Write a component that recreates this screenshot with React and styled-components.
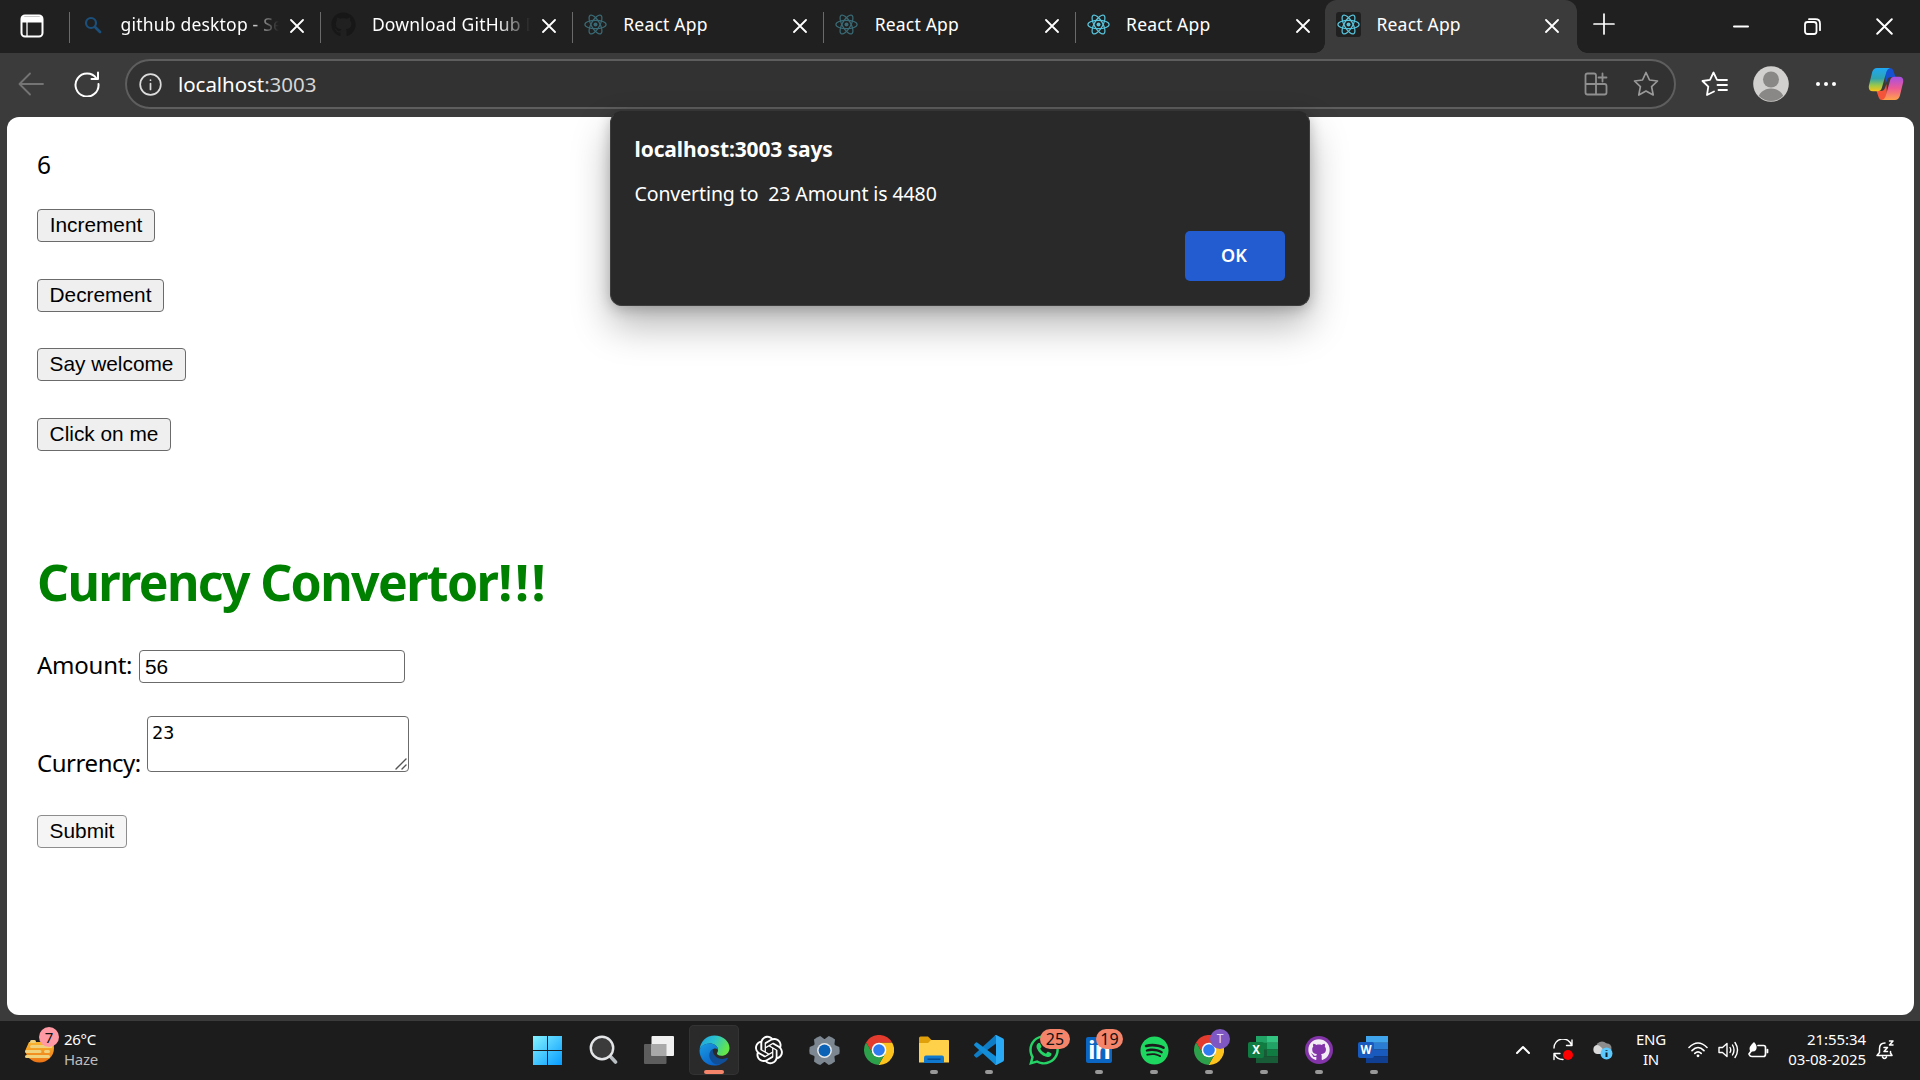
import React from "react";
import styled, { createGlobalStyle } from "styled-components";
import { FaGithub, FaSpotify, FaWhatsapp } from "react-icons/fa";
import { RiOpenaiFill } from "react-icons/ri";

const Global = createGlobalStyle`
  * { box-sizing: border-box; }
  html, body { margin: 0; padding: 0; overflow: hidden; background: #3b3b3b; }
  body { font-family: "Noto Sans", "Open Sans", sans-serif; }
  svg { display: block; flex: none; }
`;

const Screen = styled.div`
  width: 1920px;
  height: 1080px;
  display: flex;
  flex-direction: column;
  background: #3b3b3b;
  overflow: hidden;
`;

/* ---------- tab strip ---------- */
const TabStrip = styled.header`
  height: 53px;
  flex: none;
  display: flex;
  background: #202020;
`;
const StripLead = styled.div`
  width: 69px;
  flex: none;
  display: flex;
  align-items: center;
  justify-content: center;
  padding: 0 6px 2px 0;
`;
const Tab = styled.div`
  width: ${(p) => (p.$active ? 252 : 251.4)}px;
  height: 53px;
  flex: none;
  display: flex;
  align-items: center;
  margin-left: ${(p) => (p.$active ? -1 : 0)}px;
  padding: 0 ${(p) => (p.$active ? 18 : 16)}px 4px 11px;
  position: relative;
  background: ${(p) => (p.$active ? "#3b3b3b" : "transparent")};
  border-radius: 12px 12px 0 0;
  ${(p) =>
    p.$active
      ? `
    &::before, &::after {
      content: "";
      position: absolute;
      bottom: 0;
      width: 10px;
      height: 10px;
    }
    &::before { left: -10px; background: radial-gradient(circle at 0 0, transparent 9.5px, #3b3b3b 10px); }
    &::after { right: -10px; background: radial-gradient(circle at 100% 0, transparent 9.5px, #3b3b3b 10px); }
  `
      : `
    &::before {
      content: "";
      position: absolute;
      left: 0;
      top: 12px;
      width: 1px;
      height: 31px;
      background: #6a6a6a;
    }
  `}
`;
const Favicon = styled.div`
  width: 25px;
  height: 25px;
  flex: none;
  display: flex;
  align-items: center;
  justify-content: center;
  border-radius: 3px;
  background: ${(p) => (p.$boxed ? "#202020" : "transparent")};
  opacity: ${(p) => (p.$dim ? 0.45 : 1)};
`;
const TabTitle = styled.div`
  width: 158px;
  margin: 0 0 2px 15.5px;
  font-size: 17.5px;
  line-height: 28px;
  letter-spacing: 0.2px;
  color: #fff;
  white-space: nowrap;
  overflow: hidden;
  mask-image: ${(p) => (p.$fade ? "linear-gradient(90deg, #000 126px, transparent 158px)" : "none")};
`;
const TabClose = styled.div`
  margin-left: auto;
  padding-top: 3px;
`;
const NewTab = styled.div`
  width: 54px;
  display: flex;
  align-items: center;
  justify-content: center;
  padding-bottom: 5px;
`;
const WindowControls = styled.div`
  margin-left: auto;
  display: flex;
`;
const WindowControl = styled.div`
  width: 71.5px;
  display: flex;
  align-items: center;
  justify-content: center;
`;

/* ---------- toolbar ---------- */
const Toolbar = styled.div`
  height: 64px;
  flex: none;
  display: flex;
  align-items: center;
  padding: 0 0 2px 17px;
`;
const ToolSlot = styled.div`
  width: ${(p) => p.$w}px;
  padding-left: ${(p) => p.$shift || 0}px;
  flex: none;
  display: flex;
  justify-content: center;
  align-items: center;
`;
const AddressBar = styled.div`
  width: 1551px;
  height: 50px;
  flex: none;
  margin: 0 10px 0 11px;
  display: flex;
  align-items: center;
  padding: 0 3px 0 12px;
  background: #323232;
  border: 2px solid #5e5e5e;
  border-radius: 25px;
`;
const Url = styled.div`
  margin: 0 auto 0 16px;
  font-size: 20.5px;
  letter-spacing: -0.05px;
  color: #fff;
  line-height: 28px;
  padding-bottom: 1px;
  span { color: #d6d6d6; }
`;

/* ---------- page ---------- */
const Viewport = styled.main`
  width: 1907px;
  height: 898px;
  margin-left: 7px;
  flex: none;
  position: relative;
  padding: 31px 30px 0;
  background: #fff;
  border-radius: 12px;
  color: #000;
  font-size: 24px;
`;
const Counter = styled.div`
  height: 61px;
  font-size: 24.5px;
  line-height: 33px;
`;
const ButtonStack = styled.div`
  display: flex;
  flex-direction: column;
  align-items: flex-start;
  gap: 36.5px;
`;
const PageButton = styled.button`
  width: ${(p) => p.$w}px;
  height: 33px;
  padding: 0 0 1px;
  border: 1px solid ${(p) => (p.$light ? "#8d8d8d" : "#6b6b6b")};
  border-radius: 4px;
  background: ${(p) => (p.$light ? "#f5f5f5" : "#efefef")};
  color: #000;
  font: 20.83px/28px "Liberation Sans", Arial, sans-serif;
  white-space: nowrap;
`;
const Heading = styled.h1`
  margin: 97.5px 0 0;
  height: 102px;
  font-size: 50px;
  line-height: 68px;
  font-weight: 700;
  letter-spacing: -1.65px;
  color: #008000;
`;
const Bangs = styled.span`
  margin-left: 1px;
  letter-spacing: 2.6px;
`;
const AmountRow = styled.label`
  display: flex;
  gap: 8px;
  line-height: 29px;
  height: 33px;
`;
const AmountInput = styled.input`
  width: 266px;
  height: 33px;
  padding: 0 5px;
  border: 1px solid #6b6b6b;
  border-radius: 4px;
  outline: none;
  background: #fff;
  color: #000;
  font: 20.83px "Liberation Sans", Arial, sans-serif;
`;
const LabelText = styled.span`
  width: ${(p) => p.$w}px;
  white-space: nowrap;
  letter-spacing: ${(p) => p.$ls}px;
  margin-bottom: ${(p) => (p.$drop ? -7 : 0)}px;
`;
const CurrencyRow = styled.label`
  display: flex;
  align-items: flex-end;
  gap: 8px;
  margin: 33px 0 0;
  height: 56px;
`;
const SubmitRow = styled.div`
  display: flex;
  margin-top: 43px;
`;
const AreaWrap = styled.span`
  position: relative;
  display: flex;
  svg { position: absolute; right: 2px; bottom: 2px; }
`;
const CurrencyArea = styled.textarea`
  width: 262px;
  height: 56px;
  padding: 4px;
  border: 1px solid #6b6b6b;
  border-radius: 4px;
  resize: none;
  outline: none;
  background: #fff;
  color: #000;
  font: 18.5px/24px "DejaVu Sans Mono", monospace;
`;

/* ---------- alert ---------- */
const Dialog = styled.div`
  position: absolute;
  left: 603px;
  top: -6px;
  width: 700px;
  height: 195px;
  padding: 22px 24px 24px 23.5px;
  display: flex;
  flex-direction: column;
  background: #292929;
  border: 1px solid #3d3d3d;
  border-top-color: #292929;
  border-radius: 12px;
  box-shadow: 0 20px 38px rgba(0, 0, 0, 0.28), 0 3px 14px rgba(0, 0, 0, 0.22);
  color: #fff;
`;
const DialogTitle = styled.div`
  font-size: 21px;
  font-weight: 700;
  line-height: 31px;
  letter-spacing: -0.12px;
`;
const DialogText = styled.div`
  margin-top: 15px;
  font-size: 19.5px;
  line-height: 28px;
  letter-spacing: -0.1px;
  white-space: pre;
`;
const OkButton = styled.button`
  margin: auto 0 0 auto;
  width: 100px;
  height: 50px;
  padding: 0 2px 2px 0;
  border: 0;
  border-radius: 5px;
  background: #225cd0;
  color: #fff;
  font: 600 18px "Noto Sans", sans-serif;
`;

/* ---------- taskbar ---------- */
const Taskbar = styled.footer`
  height: 59px;
  margin-top: 6px;
  flex: none;
  display: flex;
  background: #1c1c1c;
`;
const Weather = styled.div`
  width: 522px;
  flex: none;
  padding: 6px 0 0 25px;
  display: flex;
  gap: 5px;
`;
const WeatherText = styled.div`
  padding-top: 2px;
  font-size: 15px;
  line-height: 20px;
  letter-spacing: -0.3px;
  color: #fff;
  div + div { color: #bdbdbd; }
`;
const IconBadgeWrap = styled.div`
  position: relative;
  width: 34px;
  height: 36px;
`;
const Badge = styled.span`
  position: absolute;
  left: ${(p) => p.$x}px;
  top: ${(p) => p.$y}px;
  width: ${(p) => p.$w}px;
  height: 20px;
  border-radius: 10px;
  background: ${(p) => p.$bg};
  color: ${(p) => p.$fg || "#111"};
  font-size: ${(p) => p.$size || 15}px;
  line-height: 20px;
  text-align: center;
`;
const Apps = styled.div`
  flex: none;
  display: flex;
  gap: 5px;
  padding-top: 4px;
`;
const AppCell = styled.div`
  position: relative;
  width: 50px;
  height: 50px;
  flex: none;
  margin-right: ${(p) => (p.$spaced ? 1 : 0)}px;
  border-radius: 5px;
  display: flex;
  align-items: center;
  justify-content: center;
  background: ${(p) => (p.$active ? "#2a2a2a" : "transparent")};
  box-shadow: ${(p) => (p.$active ? "inset 0 0 0 1px #333" : "none")};
  &::after {
    content: "";
    display: ${(p) => (p.$running || p.$active ? "block" : "none")};
    position: absolute;
    bottom: 1px;
    left: ${(p) => (p.$active ? 15 : 21)}px;
    width: ${(p) => (p.$active ? 20 : 8)}px;
    height: 4px;
    border-radius: 2px;
    background: ${(p) => (p.$active ? "#f4846a" : "#989898")};
  }
`;
const Tray = styled.div`
  margin-left: auto;
  flex: none;
  display: flex;
  align-items: center;
  padding: 0 17px 2px 0;
`;
const TraySlot = styled.div`
  width: ${(p) => p.$w}px;
  display: flex;
  justify-content: center;
`;
const TrayText = styled.div`
  width: ${(p) => p.$w}px;
  font-size: 15px;
  line-height: 20px;
  letter-spacing: ${(p) => p.$ls || 0}px;
  text-align: ${(p) => p.$align};
  color: #fff;
  padding-bottom: 1px;
`;

/* ---------- drawings ---------- */
const Stroke = ({ w = 24, h = w, box = `0 0 ${w} ${h}`, c = "#fff", s = 1.8, children }) => (
  <svg width={w} height={h} viewBox={box} fill="none" stroke={c} strokeWidth={s} strokeLinecap="round" strokeLinejoin="round">
    {children}
  </svg>
);
const ReactLogo = () => (
  <Stroke w={23} h={25} box="-11.5 -12.5 23 25" c="#58c4dc" s={1.2}>
    <ellipse rx="10.6" ry="4.2" />
    <ellipse rx="10.6" ry="4.2" transform="rotate(60)" />
    <ellipse rx="10.6" ry="4.2" transform="rotate(120)" />
    <circle r="2" fill="#58c4dc" stroke="none" />
  </Stroke>
);
const SearchFav = () => (
  <Stroke w={18} c="#1b4f7c" s={2.2}>
    <circle cx="7" cy="7" r="5" />
    <path d="M11 11l5 5" strokeWidth="2.800" />
  </Stroke>
);
const Cross = ({ size = 14, s = 1.8 }) => (
  <Stroke w={size} h={size} box="0 0 14 14" s={s}>
    <path d="M1 1l12 12M13 1L1 13" />
  </Stroke>
);
const ChromeIcon = () => (
  <svg width="30" height="30" viewBox="-15 -15 30 30">
    <path d="M0 -7.2H13.2A15 15 0 0 0 -13 -7.5L-6.2 3.6L0 0Z" fill="#e33b2e" />
    <path d="M6.2 3.6L-.4 15A15 15 0 0 0 13.2 -7.2H0V0Z" fill="#fcc31e" />
    <path d="M-6.2 3.6L-13 -7.5A15 15 0 0 0 -.4 15L6.2 3.6L0 0Z" fill="#2da04c" />
    <circle r="7.3" fill="#fff" />
    <circle r="5.8" fill="#2f7cf0" />
  </svg>
);
const EdgeIcon = () => (
  <svg width="31" height="31" viewBox="0 0 31 31">
    <defs>
      <linearGradient id="eTop" x1="0" y1="0" x2="1" y2=".4">
        <stop offset="0" stopColor="#1e9de0" />
        <stop offset=".5" stopColor="#2bc3cf" />
        <stop offset="1" stopColor="#63e64a" />
      </linearGradient>
      <linearGradient id="eLow" x1="0" y1="0" x2=".6" y2="1">
        <stop offset="0" stopColor="#1b9de2" />
        <stop offset="1" stopColor="#0a63c9" />
      </linearGradient>
    </defs>
    <path d="M.6 15C1 6.500 7.500.5 15.500.5C24 .5 30.500 6.500 30.500 13C30.500 18 26.500 20.800 22.500 20.800C19.500 20.800 18 19.600 18 18.500C18 17.500 19 17 19 15C19 11 15 8.500 10.800 8.500C5.500 8.500 1.500 11.500.6 15Z" fill="url(#eTop)" />
    <path d="M.5 15.500C1.500 11 5.500 8.500 10.800 8.500C15.200 8.500 19 11.200 19 15C16 11.500 11.500 14.500 11.500 19.500C11.500 25 16.500 29 21.500 29.200C19.700 30.200 17.500 30.600 15.500 30.600C6.800 30.600.5 23.800.5 15.500Z" fill="url(#eLow)" />
    <path d="M13.800 14C10.500 16 9.500 20 11 23.700C13 28.500 18 30.500 21.700 29.200C25 28 27.500 26 29 23.300C29.200 22.800 28.700 22.500 28.200 22.800C21.500 26 13.200 22 13.800 14Z" fill="#104f97" />
  </svg>
);
const StartIcon = () => (
  <svg width="29" height="29" viewBox="0 0 29 29">
    <defs>
      <linearGradient id="win" x1="0" y1="0" x2="29" y2="29" gradientUnits="userSpaceOnUse">
        <stop stopColor="#84f3ff" />
        <stop offset="1" stopColor="#069bff" />
      </linearGradient>
    </defs>
    <path fill="url(#win)" d="M0 0h14v14H0zM15 0h14v14H15zM0 15h14v14H0zM15 15h14v14H15z" />
  </svg>
);
const SearchIcon = () => (
  <svg width="29" height="30" viewBox="0 0 29 30" fill="none">
    <path d="M20.500 20.500L26.500 27" stroke="#b9bec3" strokeWidth="3.600" strokeLinecap="round" />
    <circle cx="13" cy="13" r="11.200" fill="#3b3b3b" stroke="#e3e5e7" strokeWidth="2.400" />
  </svg>
);
const TaskViewIcon = () => (
  <svg width="30" height="28" viewBox="0 0 30 28">
    <rect y="8" width="22.500" height="20" rx="1" fill="#5d5d5d" />
    <rect x="7.500" width="22.500" height="20" rx="1" fill="#f0f0f0" />
    <path d="M7.500 8h15v12h-15z" fill="#a9a9a9" />
  </svg>
);
const GearIcon = () => (
  <svg width="31" height="31" viewBox="-15.500 -15.500 31 31">
    {[0, 60, 120, 180, 240, 300].map((a) => (
      <path key={a} d="M-6 -9L-3.600 -14.800Q0 -15.500 3.600 -14.800L6 -9Z" fill="#7d8791" transform={`rotate(${a + 30})`} />
    ))}
    <circle r="11.500" fill="#7d8791" />
    <circle r="7.400" fill="#e8eaec" />
    <circle r="5.900" fill="#0c62b4" />
  </svg>
);
const FolderIcon = () => (
  <svg width="30" height="28" viewBox="0 0 30 28">
    <path d="M0 2Q0 .5 1.500.5H9L12.500 4H28.500Q30 4 30 5.500V14H0Z" fill="#dfa00a" />
    <path d="M0 7H9L12 4H29Q30 4 30 5V26.500H0Z" fill="#ffd04a" />
    <path d="M5 27V21.500Q5 19.500 7 19.500H23Q25 19.500 25 21.500V27Z" fill="#1179cd" />
    <path d="M8.500 23.200H21.500" stroke="#06498f" strokeWidth="1.500" />
  </svg>
);
const VsCodeIcon = () => (
  <svg width="30" height="30" viewBox="0 0 30 30">
    <path d="M22 0L22 8.500L3.500 22.300Q2.500 23 1.600 22.200L.4 21Q-.4 20.200.5 19.300L20.500.9Q21.200.2 22 0Z" fill="#0f7dc6" />
    <path d="M22 30L22 21.500L3.500 7.700Q2.500 7 1.600 7.800L.4 9Q-.4 9.800.5 10.700L20.500 29.100Q21.200 29.800 22 30Z" fill="#138dd8" />
    <path d="M22.300.1L28.700 3.200Q30 3.900 30 5.300V24.700Q30 26.100 28.700 26.800L22.300 29.900Q21.300 30.200 20.600 29.300Q22 29.800 22 28V2Q22 .2 20.600.7Q21.300-.2 22.300.1Z" fill="#2aa9f4" />
  </svg>
);
const LetterTile = styled.span`
  position: absolute;
  left: 9px;
  top: 17px;
  width: 16px;
  height: 16px;
  border-radius: 2px;
  background: ${(p) => p.$bg};
  color: #fff;
  font: 700 11.5px/16px "Noto Sans", sans-serif;
  text-align: center;
`;
const OfficeSheet = ({ colors, split }) => (
  <svg width="30" height="28" viewBox="0 0 30 28">
    {colors.map((c, i) => (
      <rect key={i} x="7" y={i * 6.75} width="22" height="6.800" fill={c} />
    ))}
    {split && (
      <>
        <path d="M7 0h11v6.750H7z" fill="#21a366" />
        <path d="M7 6.750h11v6.750H7z" fill="#107c41" />
        <path d="M7 13.500h11v6.750H7z" fill="#185c37" />
      </>
    )}
  </svg>
);
const LinkedInTile = styled.span`
  width: 26px;
  height: 26px;
  border-radius: 2px;
  background: #0a66c2;
  color: #fff;
  font: 700 25px/25px "Open Sans", sans-serif;
  letter-spacing: -1px;
  text-align: center;
`;
const GithubDisc = styled.span`
  width: 28px;
  height: 28px;
  border-radius: 50%;
  background: #8334a8;
  color: #f2ecf5;
  display: flex;
  align-items: center;
  justify-content: center;
`;
const CopilotIcon = () => (
  <svg width="36" height="34" viewBox="0 0 36 34">
    <defs>
      <linearGradient id="cpA" x1="0" y1="0" x2="0" y2="1">
        <stop stopColor="#20a8f5" />
        <stop offset=".45" stopColor="#2fa4b0" />
        <stop offset=".75" stopColor="#9cc84a" />
        <stop offset="1" stopColor="#fcc417" />
      </linearGradient>
      <linearGradient id="cpB" x1="0" y1="0" x2="0" y2="1">
        <stop stopColor="#a64fe6" />
        <stop offset=".5" stopColor="#ee5a94" />
        <stop offset="1" stopColor="#ffa24b" />
      </linearGradient>
    </defs>
    <path d="M17 1H22Q24.500 1 25.300 3.500L27.500 10H23Q20 10 19 13L17.500 17Z" fill="#1551d0" />
    <path d="M19 33H14Q11.500 33 10.700 30.500L8.500 24H13Q16 24 17 21L18.500 17Z" fill="#f4553a" />
    <path d="M9 1H22Q19.500 1.500 18.500 4.500L13.800 21Q12.800 24.300 9.500 24.300H5Q.2 24.300.8 19L4.200 5Q5.500 1 9 1Z" fill="url(#cpA)" />
    <path d="M27 33H14Q16.500 32.500 17.500 29.500L22.200 13Q23.200 9.700 26.500 9.700H31Q35.800 9.700 35.200 15L31.800 29Q30.500 33 27 33Z" fill="url(#cpB)" />
  </svg>
);
const Star = "M13 1.500L16.500 9L24.500 10L18.600 15.700L20.200 24L13 20L5.800 24L7.400 15.700L1.500 10L9.500 9Z";

const tabs = [
  { title: "github desktop - Search", icon: <SearchFav />, fade: true },
  { title: "Download GitHub Desktop", icon: <FaGithub size={25} color="#171717" />, fade: true },
  { title: "React App", icon: <ReactLogo />, dim: true },
  { title: "React App", icon: <ReactLogo />, dim: true },
  { title: "React App", icon: <ReactLogo /> },
  { title: "React App", icon: <ReactLogo />, active: true },
];

const pageButtons = [
  ["Increment", 118],
  ["Decrement", 127],
  ["Say welcome", 149],
  ["Click on me", 134],
];

const salmon = "#f4846a";

export default function App() {
  return (
    <Screen>
      <Global />
      <TabStrip>
        <StripLead>
          <Stroke w={24} s={2}>
            <rect x="1.500" y="1.500" width="21" height="21" rx="3.500" />
            <path d="M2 3.500h20v4H2z" fill="#fff" />
            <path d="M7 8v14" strokeWidth="1.300" />
          </Stroke>
        </StripLead>
        {tabs.map((t, i) => (
          <Tab key={i} $active={t.active}>
            <Favicon $dim={t.dim} $boxed={t.active}>{t.icon}</Favicon>
            <TabTitle $fade={t.fade}>{t.title}</TabTitle>
            <TabClose><Cross /></TabClose>
          </Tab>
        ))}
        <NewTab>
          <Stroke w={22} s={1.7}><path d="M11 1v20M1 11h20" /></Stroke>
        </NewTab>
        <WindowControls>
          <WindowControl><Stroke w={16} h={3} s={2}><path d="M1 1.500h14" /></Stroke></WindowControl>
          <WindowControl>
            <Stroke w={17} s={1.8}>
              <rect x="1" y="4" width="11.500" height="12" rx="2.500" />
              <path d="M5 1.200h6.500q4.500 0 4.500 4.500v6.500" />
            </Stroke>
          </WindowControl>
          <WindowControl><Cross size={17} s={1.6} /></WindowControl>
        </WindowControls>
      </TabStrip>

      <Toolbar>
        <ToolSlot $w={28}>
          <Stroke w={26} h={24} c="#747474"><path d="M25 12H1.500M12 1.500L1.500 12L12 22.500" /></Stroke>
        </ToolSlot>
        <ToolSlot $w={69} $shift={15}>
          <Stroke w={26} s={2}><path d="M22.500 7.500A11.500 11.500 0 1 0 24.500 13M24 1.500V8H17.500" /></Stroke>
        </ToolSlot>
        <AddressBar>
          <Stroke w={23} c="#dcdcdc" s={1.7}>
            <circle cx="11.500" cy="11.500" r="10.300" />
            <path d="M11.500 10.500v6M11.500 7v.2" />
          </Stroke>
          <Url>localhost<span>:3003</span></Url>
          <ToolSlot $w={50}>
            <Stroke w={24} c="#8f8f8f">
              <path d="M12 12V3.500Q12 1.500 10 1.500H3.500Q1.500 1.500 1.500 3.500V20.500Q1.500 22.500 3.500 22.500H20.500Q22.500 22.500 22.500 20.500V14Q22.500 12 20.500 12H1.500M12 12V22.500M18.500 1.500V9.500M14.500 5.500H22.500" />
            </Stroke>
          </ToolSlot>
          <ToolSlot $w={50}><Stroke w={26} c="#9a9a9a" s={1.7}><path d={Star} /></Stroke></ToolSlot>
        </AddressBar>
        <ToolSlot $w={57}>
          <Stroke w={27} h={26} s={1.8}>
            <path d="M18 9L16 8.800L12.500 1.500L9 8.800L1.500 10L7.300 15.700L6 24L13 20.500M18 9H26M16.500 14H26M17.500 19H26" />
          </Stroke>
        </ToolSlot>
        <ToolSlot $w={56}>
          <svg width="36" height="36" viewBox="0 0 36 36">
            <clipPath id="face"><circle cx="18" cy="18" r="17" /></clipPath>
            <circle cx="18" cy="18" r="17.800" fill="#d2d0ce" />
            <g clipPath="url(#face)" fill="#8a8886">
              <circle cx="18" cy="13.500" r="8" />
              <ellipse cx="18" cy="34" rx="13" ry="11.500" />
            </g>
          </svg>
        </ToolSlot>
        <ToolSlot $w={54}>
          <svg width="22" height="6" viewBox="0 0 22 6" fill="#fff"><circle cx="3" cy="3" r="2" /><circle cx="11" cy="3" r="2" /><circle cx="19" cy="3" r="2" /></svg>
        </ToolSlot>
        <ToolSlot $w={66}><CopilotIcon /></ToolSlot>
      </Toolbar>

      <Viewport>
        <Counter>6</Counter>
        <ButtonStack>
          {pageButtons.map(([label, w]) => (
            <PageButton key={label} $w={w}>{label}</PageButton>
          ))}
        </ButtonStack>
        <Heading>Currency Convertor<Bangs>!!!</Bangs></Heading>
        <AmountRow>
          <LabelText $w={94} $ls={-0.25}>Amount:</LabelText>
          <AmountInput defaultValue="56" />
        </AmountRow>
        <CurrencyRow>
          <LabelText $w={102} $ls={-0.45} $drop>Currency:</LabelText>
          <AreaWrap>
            <CurrencyArea defaultValue="23" />
            <Stroke w={12} c="#555" s={1.4}><path d="M1 11L11 1M7 11L11 7" /></Stroke>
          </AreaWrap>
        </CurrencyRow>
        <SubmitRow>
          <PageButton $w={90} $light>Submit</PageButton>
        </SubmitRow>

        <Dialog>
          <DialogTitle>localhost:3003 says</DialogTitle>
          <DialogText>{"Converting to  23 Amount is 4480"}</DialogText>
          <OkButton>OK</OkButton>
        </Dialog>
      </Viewport>

      <Taskbar>
        <Weather>
          <IconBadgeWrap>
            <svg width="30" height="36" viewBox="0 0 30 36">
              <defs><linearGradient id="sun" x1="0" y1="0" x2="0" y2="1"><stop stopColor="#ffd23c" /><stop offset="1" stopColor="#ec7414" /></linearGradient></defs>
              <circle cx="14.500" cy="21" r="14.500" fill="url(#sun)" />
              <path d="M0 0H30V15H4L0 24Z" fill="#1c1c1c" />
              <path d="M6.500 14.500H9.500M6.500 19.500H26M1.500 24.500H15M20.500 24.500H23.500M1.500 29.500H23.500" stroke="#f0d27c" strokeWidth="3" strokeLinecap="round" />
            </svg>
            <Badge $x={14} $y={0} $w={20} $bg="#ff99a4">7</Badge>
          </IconBadgeWrap>
          <WeatherText><div>26°C</div><div>Haze</div></WeatherText>
        </Weather>
        <Apps>
          <AppCell $spaced><StartIcon /></AppCell>
          <AppCell $spaced><SearchIcon /></AppCell>
          <AppCell><TaskViewIcon /></AppCell>
          <AppCell $active><EdgeIcon /></AppCell>
          <AppCell><RiOpenaiFill size={34} color="#fff" /></AppCell>
          <AppCell><GearIcon /></AppCell>
          <AppCell><ChromeIcon /></AppCell>
          <AppCell $running><FolderIcon /></AppCell>
          <AppCell $running><VsCodeIcon /></AppCell>
          <AppCell>
            <FaWhatsapp size={34} color="#25d366" />
            <Badge $x={21} $y={4} $w={30} $bg={salmon} $size={16}>25</Badge>
          </AppCell>
          <AppCell $running>
            <LinkedInTile>in</LinkedInTile>
            <Badge $x={22} $y={4} $w={27} $bg={salmon} $size={16}>19</Badge>
          </AppCell>
          <AppCell $running><FaSpotify size={29} color="#1ed760" /></AppCell>
          <AppCell $running>
            <ChromeIcon />
            <Badge $x={26} $y={4} $w={20} $bg="#7e57c2" $fg="#e5daf7" $size={12}>T</Badge>
          </AppCell>
          <AppCell $running>
            <OfficeSheet split colors={["#33c481", "#21a366", "#107c41", "#185c37"]} />
            <LetterTile $bg="#107c41">X</LetterTile>
          </AppCell>
          <AppCell $running><GithubDisc><FaGithub size={22} /></GithubDisc></AppCell>
          <AppCell $running>
            <OfficeSheet colors={["#41a5ee", "#2b7cd3", "#185abd", "#103f91"]} />
            <LetterTile $bg="#185abd">W</LetterTile>
          </AppCell>
        </Apps>
        <Tray>
          <TraySlot $w={40}><Stroke w={14} h={9} s={2}><path d="M1 8L7 2L13 8" /></Stroke></TraySlot>
          <TraySlot $w={40}>
            <Stroke w={22} s={1.4}>
              <path d="M2 9A9 9 0 0 1 19.500 6M20 1V6.500H14.500M2 20.500V14.500H8M2.500 15A9 9 0 0 0 11 20.500" />
              <circle cx="16" cy="16" r="5" fill="#f00" stroke="none" />
            </Stroke>
          </TraySlot>
          <TraySlot $w={40}>
            <svg width="22" height="20" viewBox="0 0 22 20">
              <circle cx="10" cy="7.500" r="6" fill="#8c8c8c" />
              <circle cx="15" cy="8" r="4.500" fill="#8c8c8c" />
              <path d="M5 14A4.600 4.600 0 0 1 5 5Q9 5 14 14Z" fill="#d9d9d9" />
              <circle cx="14.500" cy="13.500" r="6" fill="#5cc8fb" />
              <path d="M14.500 12.500V17M14.500 10V10.800" stroke="#10202c" strokeWidth="2" />
            </svg>
          </TraySlot>
          <TrayText $w={56} $align="center" $ls={-0.2}>ENG<br />IN</TrayText>
          <TraySlot $w={38}>
            <Stroke w={20} h={16} s={1.6}>
              <path d="M1 5.500Q10-3.500 19 5.500M4 8.600Q10 2.500 16 8.600M6.800 11.400Q10 8.300 13.200 11.400" />
              <circle cx="10" cy="13.800" r="1.400" fill="#fff" stroke="none" />
            </Stroke>
          </TraySlot>
          <TraySlot $w={22}>
            <Stroke w={21} h={18} s={1.4}>
              <path d="M1 6.500V11.500H4.500L9 15.500V2.500L4.500 6.500ZM12 6.500Q13.500 9 12 11.500M14.500 4Q17.500 9 14.500 14M17 1.500Q22 9 17 16.500" />
            </Stroke>
          </TraySlot>
          <TraySlot $w={38}>
            <Stroke w={21} h={18} s={1.7}>
              <path d="M10 4.500H15.500Q17.500 4.500 17.500 6.500V13Q17.500 15.500 15.500 15.500H4Q2 15.500 1.500 14M19.500 8.500V11.500" />
              <path d="M6 1Q10 5 8 9Q6 11.500 2 10Q0 6 6 1Z" fill="#fff" stroke="none" />
              <path d="M1 13L5 7.500" />
            </Stroke>
          </TraySlot>
          <TrayText $w={89} $align="right" $ls={-0.05}>21:55:34<br />03-08-2025</TrayText>
          <TraySlot $w={37}>
            <Stroke w={18} h={20} s={1.5}>
              <path d="M9 3Q3.500 3 3.500 8.500V12.500L1 15.500H16L14.500 13V11.500M6.500 17Q8.500 20 10.500 17M8 7.500H11.500L8 11.500H11.500M13.500 1H17L13.500 5H17" />
            </Stroke>
          </TraySlot>
        </Tray>
      </Taskbar>
    </Screen>
  );
}
